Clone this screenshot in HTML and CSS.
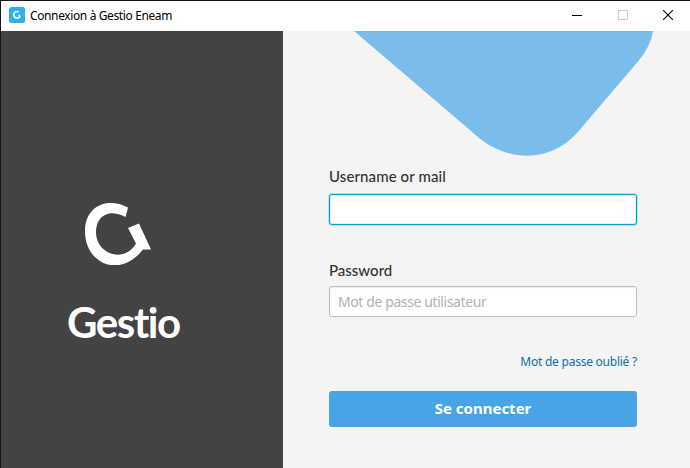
FILE: index.html
```html
<!DOCTYPE html>
<html lang="fr">
<head>
<meta charset="utf-8">
<title>Connexion à Gestio Eneam</title>
<link rel="stylesheet" href="styles.css">
</head>
<body>
<div class="window">
  <header class="titlebar">
    <svg class="app-icon" width="16" height="16" viewBox="0 0 16 16"><rect width="16" height="16" rx="2.5" fill="#31b0e8"/><path d="M9.6 4.9C6.7 3.7 4.6 5.5 4.7 8c.2 3.100 4.400 4.200 6.100 1.500L9.800 7.600" fill="none" stroke="#fff" stroke-width="1.600"/></svg>
    <span class="window-title">Connexion à Gestio Eneam</span>
    <div class="controls">
      <svg width="10" height="10" viewBox="0 0 10 10"><path d="M0 5.500H10" stroke="#000"/></svg>
      <svg width="10" height="10" viewBox="0 0 10 10"><path d="M.5.5h9v9h-9z" fill="none" stroke="#ccc"/></svg>
      <svg width="10" height="10" viewBox="0 0 10 10"><path d="M0 0 10 10M10 0 0 10" stroke="#000" stroke-width="1.100"/></svg>
    </div>
  </header>
  <div class="content">
    <aside class="brand">
      <svg class="logo" width="66" height="63" viewBox="85 202 66 63"><path d="M128 207.500 125.500 217C108 207.500 96 217 96 232C96 254 124 264 136 243.500L128 228 139 223.500 151 249.500H143C120 279 85 264 85 231C85 207 106 196 128 207.500Z" fill="#fff"/></svg>
      <h1 class="name">Gestio</h1>
    </aside>
    <main class="login">
      <svg class="shape" width="407" height="126" viewBox="283 31 407 126"><path d="M354 31 478 137C509 163 551 162 577 133L638 61.500Q651 46 653 31Z" fill="#7abdeb"/></svg>
      <form class="form">
        <label class="label user-label" for="user">Username or mail</label>
        <input class="field active" id="user" type="text">
        <label class="label pass-label" for="pass">Password</label>
        <input class="field" id="pass" type="text" placeholder="Mot de passe utilisateur">
        <a class="forgot">Mot de passe oublié ?</a>
        <button class="submit" type="button">Se connecter</button>
      </form>
    </main>
  </div>
</div>
</body>
</html>
```
FILE: styles.css
```css
* { box-sizing: border-box; }
body { margin: 0; overflow: hidden; font-family: "Noto Sans", sans-serif; }
.window { width: 690px; height: 468px; display: flex; flex-direction: column; border-top: 1px solid #171717; border-left: 1px solid #171717; background: #fff; }
.titlebar { height: 30px; flex: none; display: flex; align-items: center; padding: 0 17px 2px 8px; }
.app-icon { margin-right: 5px; }
.window-title { font-size: 12px; letter-spacing: -0.38px; color: #000; white-space: nowrap; }
.controls { margin-left: auto; display: flex; gap: 35px; }
.controls svg { display: block; }
.controls svg:first-child { margin-right: 1px; }
.content { flex: 1; display: flex; }
.brand { width: 282px; background: #434345; display: flex; flex-direction: column; padding: 171px 0 0 66px; }
.logo { margin-left: 18px; flex: none; }
.name { margin: 31px 0 0; font: 700 42px/52px Lato, sans-serif; letter-spacing: -1.5px; color: #fff; }
.login { flex: 1; position: relative; background: #f4f4f4; }
.shape { position: absolute; top: 0; left: 0; }
.form { position: relative; width: 308px; margin-left: 46px; padding-top: 133px; display: flex; flex-direction: column; }
.label { font: 500 15px/24px Lato, sans-serif; color: #333; height: 24px; }
.user-label { letter-spacing: 0.1px; }
.pass-label { margin-top: 33px; margin-bottom: -1px; }
.field { width: 308px; height: 31px; margin: 5px 0 0; padding: 0 8px 1px; border: 1px solid #bcbcbc; border-radius: 3px; background: #fff; font: 14px "Noto Sans", sans-serif; letter-spacing: -0.4px; box-shadow: inset 0 1px 1px #eee; outline: none; }
.field::placeholder { color: #b2b2b2; opacity: 1; }
.field.active { margin-top: 6px; border-color: #039ed3; box-shadow: 0 0 0 1px #b5e1f1, inset 0 0 0 1px #d9f1f8; }
.forgot { align-self: flex-end; margin-top: 35px; font-size: 12px; line-height: 20px; letter-spacing: -0.24px; color: #0c70ad; white-space: nowrap; }
.submit { height: 36px; margin: 19px 0 0; padding: 0 0 3px; border: 0; border-radius: 3px; background: #48a4e4; color: #fff; font: 700 15px "Noto Sans", sans-serif; }
```
